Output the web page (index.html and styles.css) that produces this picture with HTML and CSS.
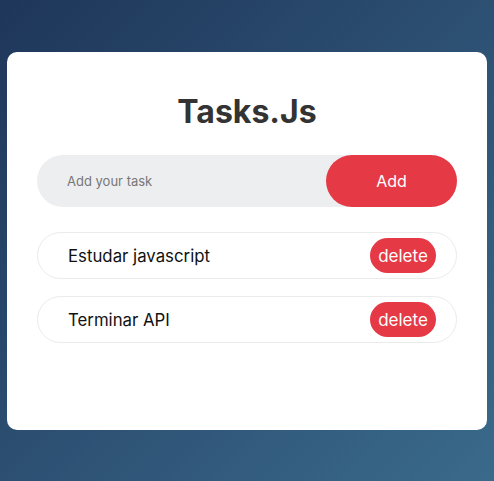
FILE: index.html
```html
<!DOCTYPE html>
<html lang="pt">
<head>
<meta charset="utf-8">
<title>Tasks.Js</title>
<link rel="stylesheet" href="styles.css">
</head>
<body>
<div class="container">
  <h2 class="title">Tasks.Js</h2>
  <div class="input-row">
    <input class="task-input" type="text" placeholder="Add your task">
    <button class="add-btn">Add</button>
  </div>
  <ul class="task-list">
    <li class="task"><span class="task-text">Estudar javascript</span><button class="del-btn">delete</button></li>
    <li class="task"><span class="task-text">Terminar API</span><button class="del-btn">delete</button></li>
  </ul>
</div>
</body>
</html>
```

FILE: styles.css
```css
* { box-sizing: border-box; }
html, body { height: 100%; }
body {
  margin: 0;
  font-family: Inter, "Noto Sans", sans-serif;
  background: linear-gradient(135deg, #1e3659 0%, #2b4d70 45%, #3a6a8a 100%);
  padding-top: 52px;
}
.container {
  width: 480px;
  margin: 0 auto;
  background: #fff;
  border-radius: 10px;
  padding: 40px 30px 87px;
}
.title {
  margin: 0 0 24px;
  text-align: center;
  font-size: 32px;
  line-height: 39px;
  font-weight: 700;
  color: #333;
}
.input-row {
  display: flex;
  height: 52px;
  background: #edeef0;
  border-radius: 30px;
  margin-bottom: 25px;
}
.task-input {
  flex: 1;
  border: none;
  outline: none;
  background: transparent;
  padding: 0 0 0 30px;
  font-family: Inter, sans-serif;
  font-size: 13px;
  color: #333;
}
.task-input::placeholder { color: #777; }
.add-btn {
  width: 131px;
  border: none;
  border-radius: 30px;
  background: #e63946;
  color: #fff;
  font-family: Inter, sans-serif;
  font-size: 16px;
}
.task-list {
  list-style: none;
  margin: 0;
  padding: 0;
  display: flex;
  flex-direction: column;
  gap: 17px;
}
.task {
  height: 47px;
  border: 1px solid #ebebeb;
  border-radius: 30px;
  display: flex;
  align-items: center;
  justify-content: space-between;
  padding: 0 20px 0 30px;
}
.task-text {
  font-size: 16.8px;
  color: #111;
}
.del-btn {
  height: 35px;
  width: 66px;
  border: none;
  border-radius: 20px;
  background: #e63946;
  color: #fff;
  font-family: Inter, sans-serif;
  font-size: 17px;
  padding: 0;
}
```
